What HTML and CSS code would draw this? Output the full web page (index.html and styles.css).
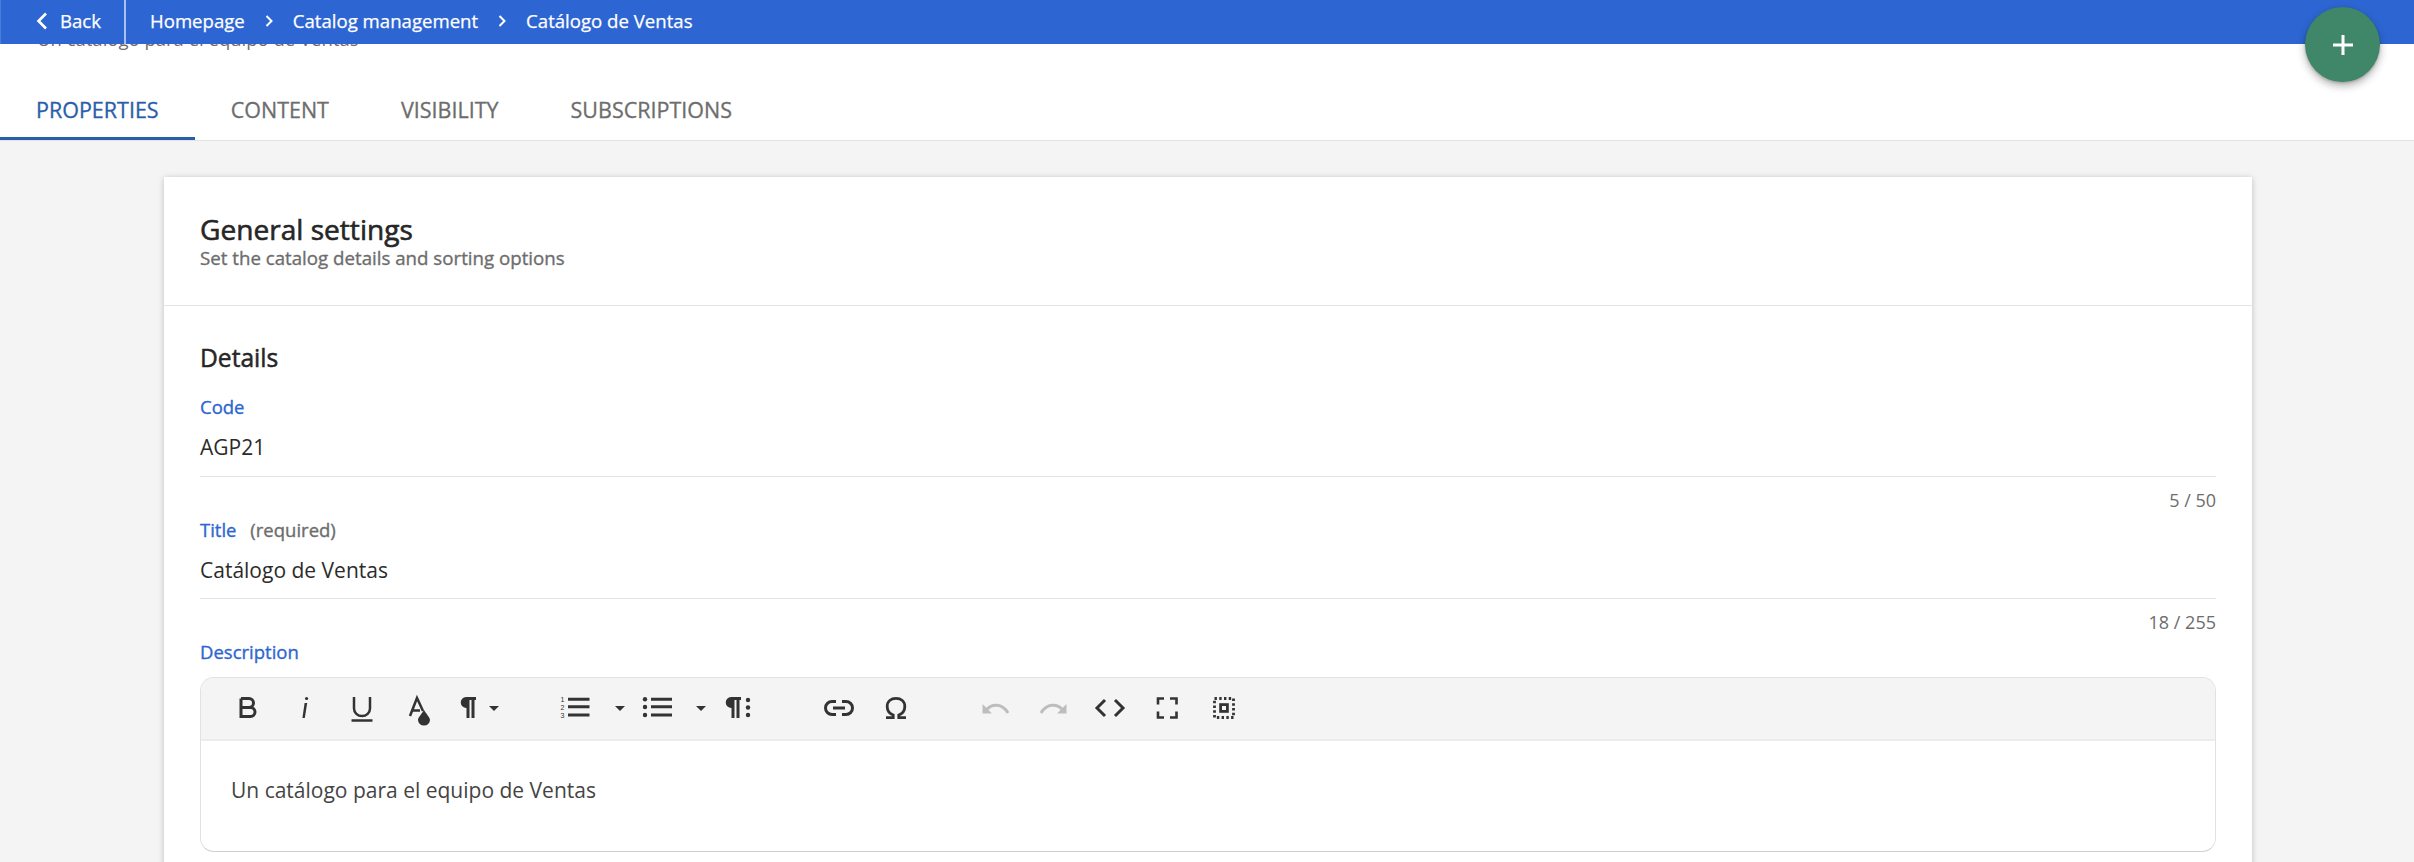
FILE: index.html
```html
<!DOCTYPE html>
<html lang="en">
<head>
<meta charset="utf-8">
<title>Catálogo de Ventas</title>
<link rel="stylesheet" href="styles.css">
</head>
<body>
<header class="topbar">
  <a class="back">
    <svg class="chev-back" width="12" height="18" viewBox="0 0 12 18"><path d="M10 1.5 L2.5 9 L10 16.5"/></svg>
    <span>Back</span>
  </a>
  <nav class="crumbs">
    <span>Homepage</span>
    <svg class="chev" width="8" height="12" viewBox="0 0 8 12"><path d="M1.5 1 L6.5 6 L1.5 11"/></svg>
    <span>Catalog management</span>
    <svg class="chev" width="8" height="12" viewBox="0 0 8 12"><path d="M1.5 1 L6.5 6 L1.5 11"/></svg>
    <span>Catálogo de Ventas</span>
  </nav>
</header>
<button class="fab" aria-label="Add">
  <svg width="20" height="20" viewBox="0 0 20 20"><path d="M10 0 V20 M0 10 H20"/></svg>
</button>

<section class="top">
  <p class="top-desc">Un catálogo para el equipo de Ventas</p>
  <div class="tabs">
    <a class="tab active">PROPERTIES</a>
    <a class="tab">CONTENT</a>
    <a class="tab">VISIBILITY</a>
    <a class="tab">SUBSCRIPTIONS</a>
  </div>
</section>

<main class="card">
  <div class="card-head">
    <h1>General settings</h1>
    <p>Set the catalog details and sorting options</p>
  </div>
  <div class="card-body">
    <h2>Details</h2>
    <label class="lbl first">Code</label>
    <div class="value">AGP21</div>
    <div class="count">5 / 50</div>
    <label class="lbl">Title <span class="req">(required)</span></label>
    <div class="value tight">Catálogo de Ventas</div>
    <div class="count">18 / 255</div>
    <label class="lbl">Description</label>
    <div class="editor">
      <div class="toolbar">
        <span class="btn"><svg viewBox="0 0 32 32"><path class="s" stroke-width="3" d="M9 6.5 V24.5 H18.5 a4.5 4.5 0 0 0 0-9 H9 M9 15.5 H17 a4.5 4.5 0 0 0 0-9 H9"/></svg></span>
        <span class="btn"><svg viewBox="0 0 32 32"><circle class="f" cx="17.6" cy="6.5" r="1.6"/><path class="f" d="M15.6 11 H18.2 L15.8 26 H13.4 Z"/></svg></span>
        <span class="btn"><svg viewBox="0 0 32 32"><path class="s" stroke-width="2.5" d="M8 5 V16.5 a8 7.5 0 0 0 16 0 V5 M5.5 28.5 H26.5"/></svg></span>
        <span class="btn"><svg viewBox="0 0 32 32"><path class="s" stroke-width="2.5" d="M7 24 L14 6 L20 19 M9.5 18.5 H17"/><path class="f" d="M21 18 C17.5 23.5 15 25.5 15 28 a6 5.5 0 0 0 12 0 C27 25.5 24.5 23.5 21 18 Z"/></svg></span>
        <span class="drop drop-para"><svg viewBox="0 0 32 32"><path class="f" d="M14 5 H24 V8 H22.5 V26 H19.5 V8 H17.5 V26 H14.5 V16 a5.5 5.5 0 0 1 -0.5 -11 Z"/></svg><i class="caret"></i></span>
        <span class="drop drop-ol"><svg viewBox="0 0 32 32"><text class="num" x="1.5" y="9.5">1</text><text class="num" x="1.5" y="17.5">2</text><text class="num" x="1.5" y="25.5">3</text><path class="s" stroke-width="3" d="M9 7.3 H30.5 M9 14.7 H30.5 M9 23 H30.5"/></svg><i class="caret"></i></span>
        <span class="drop drop-ul"><svg viewBox="0 0 32 32"><circle class="f" cx="4" cy="7.3" r="2.2"/><circle class="f" cx="4" cy="15" r="2.2"/><circle class="f" cx="4" cy="23" r="2.2"/><path class="s" stroke-width="3" d="M10 7.3 H31 M10 14.7 H31 M10 23 H31"/></svg><i class="caret"></i></span>
        <span class="btn"><svg viewBox="0 0 32 32"><path class="f" d="M8 5 H18 V8 H16.5 V26 H13.5 V8 H11.5 V26 H8.5 V16 a5.5 5.5 0 0 1 -0.5 -11 Z"/><circle class="f" cx="25" cy="8" r="2.2"/><circle class="f" cx="25" cy="15.5" r="2.2"/><circle class="f" cx="25" cy="23" r="2.2"/></svg></span>
        <span class="btn group"><svg viewBox="0 0 32 32"><path class="s" stroke-width="3" d="M13 9.5 H9 a6.5 6.5 0 0 0 0 13 H13 M19 9.5 H23 a6.5 6.5 0 0 1 0 13 H19 M10 16 H22"/></svg></span>
        <span class="btn"><svg viewBox="0 0 32 32"><path class="s" stroke-width="2.8" d="M6 25.6 H13.2 V23 C8.8 21.4 7.2 18 7.2 14.6 C7.2 9.2 11 6.4 16 6.4 S24.8 9.2 24.8 14.6 C24.8 18 23.2 21.4 18.8 23 V25.6 H26"/></svg></span>
        <span class="btn group"><svg viewBox="0 0 32 32"><path class="f-off" d="M2.5 12 V21.5 H12 Z"/><path class="s-off" stroke-width="3" d="M6 18 C12 11.5 22 11 28 21"/></svg></span>
        <span class="btn"><svg viewBox="0 0 32 32"><g transform="translate(32 0) scale(-1 1)"><path class="f-off" d="M2.5 12 V21.5 H12 Z"/><path class="s-off" stroke-width="3" d="M6 18 C12 11.5 22 11 28 21"/></g></svg></span>
        <span class="btn"><svg viewBox="0 0 32 32"><path class="s" stroke-width="3" d="M11 8 L3 16 L11 24 M21 8 L29 16 L21 24"/></svg></span>
        <span class="btn"><svg viewBox="0 0 32 32"><path class="s sq" stroke-width="2.6" d="M7 12.5 V6.5 H13 M19 6.5 H25.5 V12.5 M25.5 19.5 V25.5 H19 M13 25.5 H7 V19.5"/></svg></span>
        <span class="btn"><svg viewBox="0 0 32 32"><rect class="s" stroke-width="2.8" x="6.5" y="6.5" width="19" height="19" stroke-dasharray="2.4 2.35"/><rect class="s sq" stroke-width="2.8" x="12.6" y="12.6" width="6.8" height="6.8"/></svg></span>
      </div>
      <div class="editor-text">Un catálogo para el equipo de Ventas</div>
    </div>
    <div class="card-end"></div>
  </div>
</main>
</body>
</html>
```

FILE: styles.css
```css
* { box-sizing: border-box; }
html, body { height: 862px; overflow: hidden; }
body {
  margin: 0;
  background: #f4f4f4;
  font-family: "Open Sans", sans-serif;
  color: #212121;
}

/* fixed top bar, overlays the scrolled page */
.topbar {
  position: fixed;
  top: 0; left: 0; right: 0;
  height: 44px;
  display: flex;
  background: #2d66d2;
  color: #fff;
  font-size: 18.6px;
  -webkit-text-stroke: .25px #fff;
  line-height: 40px;
  z-index: 5;
}
.back {
  width: 126px;
  display: flex;
  align-items: center;
  padding: 0 0 2px 35px;
  gap: 12px;
  border-left: 1px solid #4a7dda;
  border-right: 2px solid #a9c1ec;
}
.back svg, .chev { fill: none; stroke: #fff; }
.back svg { stroke-width: 2.6; }
.chev { stroke-width: 2; }
.crumbs {
  display: flex;
  align-items: center;
  padding: 0 0 2px 24px;
  gap: 20px;
}
.fab {
  position: fixed;
  top: 7px; left: 2305px;
  width: 75px; height: 75px;
  padding: 0;
  border: 0;
  border-radius: 50%;
  background: #3f8768;
  box-shadow: 0 4px 8px rgba(0,0,0,.3), 0 1px 3px rgba(0,0,0,.2);
  display: flex;
  align-items: center;
  justify-content: center;
  z-index: 6;
}
.fab svg { stroke: #fff; stroke-width: 3; fill: none; }

/* page head */
.top {
  background: #fff;
  padding-top: 27px;
  border-bottom: 1px solid #e2e2e2;
}
.top-desc {
  margin: 0 0 29px;
  padding-left: 37px;
  font-size: 18.5px;
  line-height: 24px;
  color: #6d6d6d;
}
.tabs { display: flex; height: 60px; }
.tab {
  padding: 0 36px;
  line-height: 59px;
  font-size: 21.5px;
  -webkit-text-stroke: .3px #6d6d6d;
  color: #6d6d6d;
}
.tab.active {
  color: #2a5ea9;
  -webkit-text-stroke: .3px #2a5ea9;
  box-shadow: inset 0 -3px 0 #2a5ea9;
}

/* card */
.card {
  width: 2088px;
  margin: 36px 0 0 164px;
  background: #fff;
  box-shadow: 0 1px 6px rgba(0,0,0,.22);
}
.card-head {
  height: 129px;
  padding: 34px 36px 0;
  border-bottom: 1px solid #e4e4e4;
}
.card-head h1 {
  margin: 0;
  font-size: 28.1px;
  line-height: 36px;
  font-weight: 400;
  -webkit-text-stroke: .6px #262626;
  color: #262626;
}
.card-head p {
  margin: 1px 0 0;
  font-size: 18.7px;
  line-height: 20px;
  -webkit-text-stroke: .35px #6d6d6d;
  color: #6d6d6d;
}
.card-body { padding: 35px 36px 0; }
h2 {
  margin: 0;
  font-size: 24.6px;
  line-height: 33px;
  font-weight: 400;
  -webkit-text-stroke: .5px #262626;
  color: #262626;
}
.lbl {
  display: block;
  margin-top: 7px;
  font-size: 18.5px;
  line-height: 24px;
  -webkit-text-stroke: .35px #2d66d2;
  color: #2d66d2;
}
.lbl.first { margin-top: 21px; }
.req {
  margin-left: 9px;
  -webkit-text-stroke: .35px #6d6d6d;
  color: #6d6d6d;
}
.value {
  margin-top: 13px;
  padding-bottom: 14px;
  border-bottom: 1px solid #e4e4e4;
  font-size: 21px;
  line-height: 30px;
  color: #2b2b2b;
}
.value.tight { padding-bottom: 13px; }
.count {
  margin-top: 12px;
  text-align: right;
  font-size: 18px;
  line-height: 22px;
  color: #6d6d6d;
}

/* rich text editor */
.editor {
  margin-top: 13px;
  height: 175px;
  border: 1px solid #e2e2e2;
  border-bottom-color: #cfcfcf;
  border-radius: 14px;
  overflow: hidden;
}
.toolbar {
  height: 63px;
  display: flex;
  align-items: center;
  padding: 0 0 1px 18px;
  background: #f4f4f4;
  border-bottom: 2px solid #ececec;
}
.btn {
  width: 57px;
  flex: none;
  display: flex;
  justify-content: center;
}
.btn.group { margin-left: 43px; }
.drop {
  flex: none;
  display: flex;
  align-items: center;
}
.drop-para { width: 70px; padding-left: 5px; gap: 5px; }
.drop-ol { width: 80px; margin-left: 30px; padding-left: 12px; gap: 24px; }
.drop-ul { width: 83px; padding-left: 14px; gap: 23px; }
.toolbar svg {
  width: 32px;
  height: 32px;
  overflow: visible;
  flex: none;
}
.s { fill: none; stroke: #333; }
.s-off { fill: none; stroke: #bdbdbd; }
.f { fill: #333; }
.f-off { fill: #bdbdbd; }
.sq { stroke-linecap: butt; }
.num {
  font-family: "Liberation Sans", sans-serif;
  font-size: 7px;
  fill: #333;
}
.caret {
  display: block;
  width: 0; height: 0;
  border-left: 5px solid transparent;
  border-right: 5px solid transparent;
  border-top: 5px solid #333;
}
.editor-text {
  padding: 35px 30px 0;
  font-size: 21px;
  line-height: 28px;
  color: #444;
}
.card-end { height: 80px; }
```
